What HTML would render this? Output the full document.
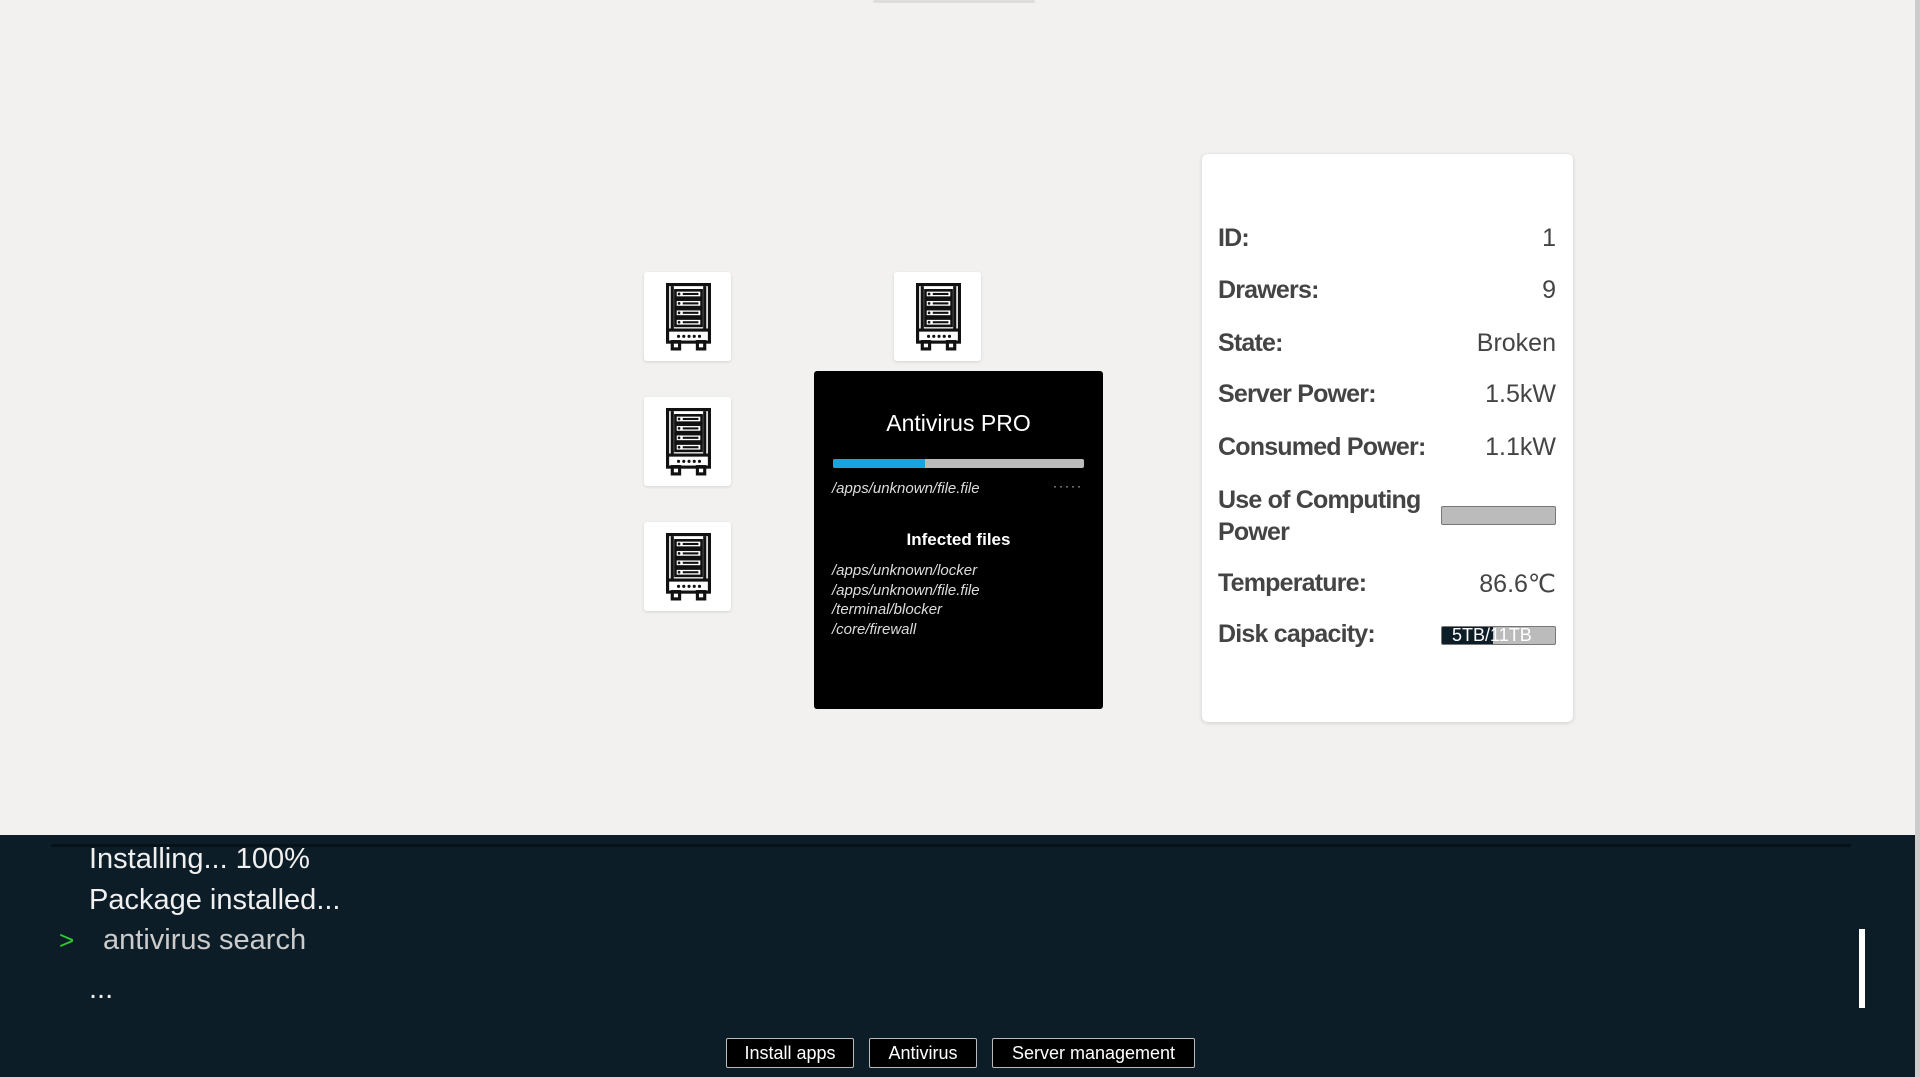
<!DOCTYPE html>
<html><head><meta charset="utf-8"><style>
*{margin:0;padding:0;box-sizing:border-box}
html,body{width:1920px;height:1077px;overflow:hidden;background:#f2f1ef;font-family:"Liberation Sans",sans-serif}
.card{position:absolute;width:87px;height:89px;background:#fff;border-radius:3px;box-shadow:0 1px 3px rgba(0,0,0,.12)}
.card svg{position:absolute;left:22px;top:9px}
#av{position:absolute;left:814px;top:371px;width:289px;height:338px;background:#000;border-radius:3px;color:#fff}
#info{position:absolute;left:1202px;top:154px;width:371px;height:568px;background:#fff;border-radius:6px;box-shadow:0 1px 4px rgba(0,0,0,.15)}
.row{position:absolute;left:16px;right:17px;font-size:25px;color:#444}
.row b{letter-spacing:-0.8px}
.row span{position:absolute;right:0;top:0}
#term{position:absolute;left:0;top:835px;width:1915px;height:242px;background:#0c1d27}
.tl{position:absolute;color:#f0f0f0;font-size:29px;font-family:"Liberation Sans Narrow","Liberation Sans",sans-serif}
.btn{position:absolute;top:1038px;height:30px;background:#000;border:1px solid #bbb;border-radius:2px;color:#fff;font-size:18px;text-align:center;line-height:28px;font-family:"Liberation Sans Narrow","Liberation Sans",sans-serif}
</style></head><body>
<div style="position:absolute;left:873px;top:0;width:162px;height:3px;background:#ddd;border-radius:2px"></div>
<svg width="0" height="0" style="position:absolute"><defs><g id="srv" fill="none" stroke="#111" stroke-width="3">
<rect x="1.5" y="1.5" width="40" height="55"/><line x1="6" y1="3" x2="6" y2="44"/><line x1="37" y1="3" x2="37" y2="44"/>
<rect x="9" y="7" width="25" height="7" stroke-width="2.5"/><rect x="9" y="16" width="25" height="7" stroke-width="2.5"/><rect x="9" y="25" width="25" height="7" stroke-width="2.5"/><rect x="9" y="34" width="25" height="7" stroke-width="2.5"/>
<line x1="2" y1="45" x2="41" y2="45"/><rect x="6" y="56" width="7" height="7"/><rect x="30" y="56" width="7" height="7"/>
<g fill="#111" stroke="none"><circle cx="12.5" cy="10.5" r="1.3"/><circle cx="12.5" cy="19.5" r="1.3"/><circle cx="12.5" cy="28.5" r="1.3"/><circle cx="12.5" cy="37.5" r="1.3"/><rect x="16" y="9.5" width="15" height="2"/><rect x="16" y="18.5" width="15" height="2"/><rect x="16" y="27.5" width="15" height="2"/><rect x="16" y="36.5" width="15" height="2"/>
<circle cx="12" cy="51" r="1.5"/><circle cx="17" cy="51" r="1.5"/><circle cx="22" cy="51" r="1.5"/><circle cx="27" cy="51" r="1.5"/><circle cx="32" cy="51" r="1.5"/></g></g></defs></svg>
<div class="card" style="left:644px;top:272px"><svg width="45" height="72" viewBox="0 0 43 65"><use href="#srv"/></svg></div>
<div class="card" style="left:894px;top:272px"><svg width="45" height="72" viewBox="0 0 43 65"><use href="#srv"/></svg></div>
<div class="card" style="left:644px;top:397px"><svg width="45" height="72" viewBox="0 0 43 65"><use href="#srv"/></svg></div>
<div class="card" style="left:644px;top:522px"><svg width="45" height="72" viewBox="0 0 43 65"><use href="#srv"/></svg></div>
<div id="av">
<div style="position:absolute;top:39px;width:100%;text-align:center;font-size:23px">Antivirus PRO</div>
<div style="position:absolute;left:19px;top:88px;width:251px;height:9px;background:#bbb;border-radius:2px;overflow:hidden"><div style="width:92px;height:100%;background:#1aa3e0"></div></div>
<div style="position:absolute;left:18px;top:109px;font-size:15px;font-style:italic;color:#ddd">/apps/unknown/file.file</div>
<div style="position:absolute;right:20px;top:108px;font-size:12px;color:#ddd;letter-spacing:2px">·····</div>
<div style="position:absolute;top:159px;width:100%;text-align:center;font-size:17px;font-weight:bold">Infected files</div>
<div style="position:absolute;left:18px;top:190px;font-size:15px;font-style:italic;color:#ddd;line-height:19.6px">/apps/unknown/locker<br>/apps/unknown/file.file<br>/terminal/blocker<br>/core/firewall</div>
</div>
<div id="info">
<div class="row" style="top:70px"><b>ID:</b><span>1</span></div>
<div class="row" style="top:122px"><b>Drawers:</b><span>9</span></div>
<div class="row" style="top:175px"><b>State:</b><span>Broken</span></div>
<div class="row" style="top:226px"><b>Server Power:</b><span>1.5kW</span></div>
<div class="row" style="top:279px"><b>Consumed Power:</b><span>1.1kW</span></div>
<div class="row" style="top:330px;line-height:32px"><b>Use of Computing<br>Power</b><span style="top:22px;width:115px;height:19px;background:#bbb;border:1px solid #777;border-radius:2px"></span></div>
<div class="row" style="top:415px"><b>Temperature:</b><span>86.6℃</span></div>
<div class="row" style="top:466px"><b>Disk capacity:</b><span style="top:6px;width:115px;height:19px;background:#bbb;border:1px solid #777;border-radius:2px;overflow:hidden;font-size:18px;line-height:17px;color:#fff;font-family:'Liberation Sans Narrow','Liberation Sans',sans-serif"><i style="position:absolute;left:0;top:0;width:51px;height:100%;background:#0c1d27"></i><i style="position:relative;font-style:normal;padding-left:10px">5TB/11TB</i></span></div>
</div>
<div style="position:absolute;left:1915px;top:0;width:5px;height:1077px;background:#ccc"></div>
<div id="term">
<div style="position:absolute;left:51px;top:9px;width:1800px;height:3px;background:#06121a"></div>
<div class="tl" style="left:89px;top:8px">Installing... 100%</div>
<div class="tl" style="left:89px;top:49px">Package installed...</div>
<div class="tl" style="left:59px;top:90px;color:#2ecc2e;font-size:26px">&gt;</div>
<div class="tl" style="left:103px;top:89px;color:#ccc">antivirus search</div>
<div class="tl" style="left:89px;top:138px">...</div>
<div style="position:absolute;left:1859px;top:94px;width:6px;height:79px;background:#fff"></div>
</div>
<div class="btn" style="left:726px;width:128px">Install apps</div>
<div class="btn" style="left:869px;width:108px">Antivirus</div>
<div class="btn" style="left:992px;width:203px">Server management</div>
</body></html>
